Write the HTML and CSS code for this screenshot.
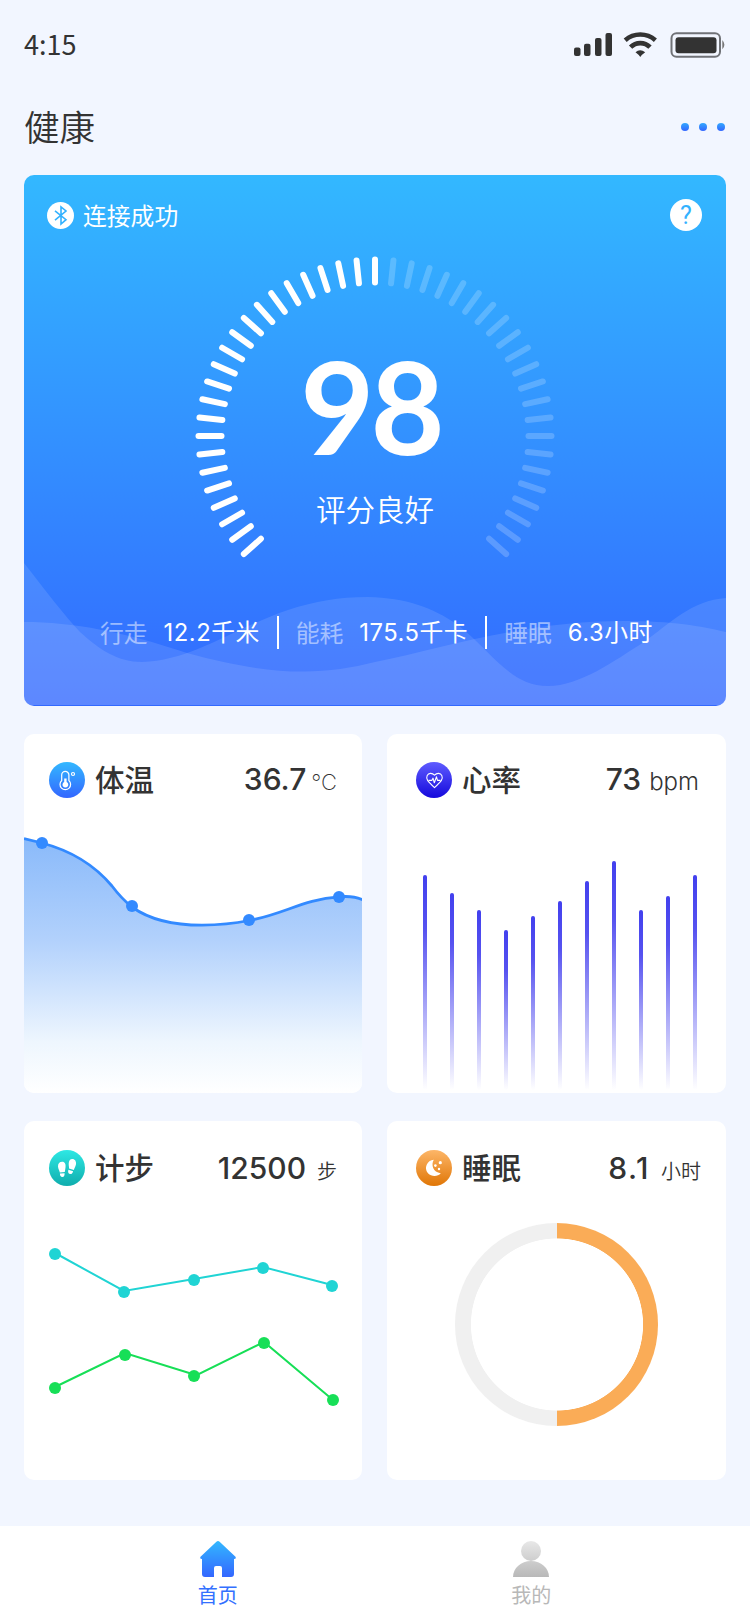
FILE: index.html
```html
<!DOCTYPE html>
<html lang="zh-CN">
<head>
    <meta charset="UTF-8">
    <meta name="viewport" content="width=device-width, initial-scale=1.0">
    <title>健康</title>
    <link rel="stylesheet" href="styles.css">
</head>
<body>

    <div class="status-bar">
        <div class="clock">4:15</div>
        <svg class="status-icons" width="152" height="28" viewBox="0 0 152 28">
            <g fill="#333">
                <rect x="0" y="17.5" width="6.5" height="8.5" rx="2"/>
                <rect x="10" y="13.7" width="6.5" height="12.3" rx="2"/>
                <rect x="21" y="8" width="6.5" height="18" rx="2"/>
                <rect x="31.5" y="3" width="6.5" height="23" rx="2"/>
                <path d="M61.5 22.3 Q66 18 71.2 22.3 Q68 24.5 66.3 27 Q64.5 24.5 61.5 22.3Z"/>
                <rect x="101.5" y="7.3" width="41" height="16" rx="3"/>
                <path d="M148.3 10 Q152.5 14.7 148.3 19.3Z" fill="#777"/>
            </g>
            <path d="M51.2 10.2 A23 23 0 0 1 81.4 10.2 M56.6 17.2 A13.5 13.5 0 0 1 76 17.2" fill="none" stroke="#333" stroke-width="4.6"/>
            <rect x="97.5" y="3.3" width="48.5" height="23.4" rx="5" fill="none" stroke="#707277" stroke-width="2"/>
        </svg>
    </div>

    <div class="page-header">
        <h1>健康</h1>
        <div class="more"><i></i><i></i><i></i></div>
    </div>

    <div class="score-card">
        <svg class="waves" width="702" height="531" viewBox="0 0 702 531">
            <g fill="#fff" fill-opacity="0.11">
                <path d="M0 388 C22 416 40 440 56 457 C76 475 94 487 118 487 C168 486 210 453 264 435 C292 426 314 422 344 422 C382 423 408 432 434 450 C466 475 486 511 524 511 C556 511 590 486 620 467 C645 449 668 425 702 423 V530 H0Z"/>
                <path d="M0 447 C50 447 100 457 163 478 C250 502 300 500 351 487 C420 473 500 446 600 446 C650 446 676 451 702 457 V530 H0Z"/>
            </g>
        </svg>
        <div class="score-top">
            <div class="connect">
                <svg width="27" height="27" viewBox="0 0 27 27">
                    <circle cx="13.5" cy="13.5" r="13.5" fill="#fff"/>
                    <path d="M8 8.8 L19 17.7 L14 22 V5 L19 9 L8 18.2" fill="none" stroke="#33b2ff" stroke-width="1.6"/>
                </svg>
                <span>连接成功</span>
            </div>
            <div class="help">?</div>
        </div>
        <div class="gauge">
            <svg id="gauge" width="360" height="302" viewBox="-180 -180 360 302"></svg>
            <div class="gauge-text">
                <div class="score">98</div>
                <div class="score-label">评分良好</div>
            </div>
        </div>
        <div class="stats">
            <div class="stat"><span>行走</span><b>12.2千米</b></div>
            <div class="stat"><span>能耗</span><b>175.5千卡</b></div>
            <div class="stat"><span>睡眠</span><b>6.3小时</b></div>
        </div>
    </div>

    <div class="cards">
        <div class="card">
            <div class="card-head">
                <svg class="icon" width="36" height="36" viewBox="0 0 36 36">
                    <defs><linearGradient id="blue" x2="0" y2="1"><stop stop-color="#33b8ff"/><stop offset="1" stop-color="#3366ff"/></linearGradient></defs>
                    <circle cx="18" cy="18" r="18" fill="url(#blue)"/>
                    <g fill="none" stroke="#fff" stroke-width="1.2">
                        <path d="M12.7 18.5 V13 A3.6 3.6 0 0 1 19.9 13 V18.5 A5.3 5.3 0 1 1 12.7 18.5Z"/>
                        <circle cx="24" cy="12" r="1.5"/>
                    </g>
                    <path d="M15.2 16.5 H17.6 V20 A2.9 2.9 0 1 1 15.2 20Z" fill="#fff"/>
                </svg>
                <h2>体温</h2>
                <div class="value">36.7<small class="unit-temp">℃</small></div>
            </div>
            <svg class="chart" width="339" height="295" viewBox="0 0 339 295">
                <defs><linearGradient id="area" x2="0" y2="1"><stop stop-color="#8abafa"/><stop offset="0.4" stop-color="#b2d1fc"/><stop offset="0.8" stop-color="#eef6fe"/><stop offset="1" stop-color="#fff"/></linearGradient></defs>
                <path d="M0 40.5 L18 45 C52 54 73 70 88 88 C94 96 98 101 108 109 C126 122 152 127.2 178 127.2 C196 127 210 125.5 225 122.5 C258 117 280 101 315 98.8 Q330 97.5 339 102 V295 H0Z" fill="url(#area)"/>
                <path d="M0 40.5 L18 45 C52 54 73 70 88 88 C94 96 98 101 108 109 C126 122 152 127.2 178 127.2 C196 127 210 125.5 225 122.5 C258 117 280 101 315 98.8 Q330 97.5 339 102" fill="none" stroke="#338aff" stroke-width="2.8"/>
                <g fill="#338aff">
                    <circle cx="18" cy="45" r="6"/>
                    <circle cx="108" cy="108" r="6"/>
                    <circle cx="225" cy="122" r="6"/>
                    <circle cx="315" cy="99" r="6"/>
                </g>
            </svg>
        </div>

        <div class="card card-right">
            <div class="card-head">
                <svg class="icon" width="36" height="36" viewBox="0 0 36 36">
                    <defs><linearGradient id="indigo" x2="0" y2="1"><stop stop-color="#5f5cff"/><stop offset="1" stop-color="#1408dc"/></linearGradient></defs>
                    <circle cx="18" cy="18" r="18" fill="url(#indigo)"/>
                    <g fill="none" stroke="#fff" stroke-width="1.1" stroke-linejoin="round">
                        <path d="M18.5 13.2 C16 10.5 12.5 11 11.2 13.4 C9.6 17 11.5 19 18.5 25.6 C25.5 19 27.4 17 25.8 13.4 C24.5 11 21 10.5 18.5 13.2Z"/>
                        <path d="M12.5 18.4 H15.8 L17 16.2 L18.3 20.8 L20.5 14.8 L21.5 18.4 H24.5"/>
                    </g>
                </svg>
                <h2>心率</h2>
                <div class="value">73<small class="unit-bpm">bpm</small></div>
            </div>
            <div class="bars" id="bars"></div>
        </div>

        <div class="card card-low">
            <div class="card-head">
                <svg class="icon" width="36" height="36" viewBox="0 0 36 36">
                    <defs><linearGradient id="teal" x2="0" y2="1"><stop stop-color="#2ee8e4"/><stop offset="1" stop-color="#0fadad"/></linearGradient></defs>
                    <circle cx="18" cy="18" r="18" fill="url(#teal)"/>
                    <g fill="#fff">
                        <path d="M13.2 11.8 C16 11.8 17 14.5 16.5 17.5 C16.2 19 16.2 20.5 15.8 22 L10.8 22.4 C10.5 20.5 9.2 19 9 16.5 C8.9 13.8 10.5 11.8 13.2 11.8Z"/>
                        <path d="M10.9 23.6 L15.6 23.2 C15.7 25.5 15 27 13.4 27 C11.7 27 10.9 25.6 10.9 23.6Z"/>
                        <path d="M23.3 9 C26 9 27.4 11.5 27 14.3 C26.6 16.5 25.4 18 24.9 20 L20 18.6 C20.2 17 19.6 15.8 19.7 13.8 C19.8 11 21 9 23.3 9Z"/>
                        <path d="M19.4 19.8 L24.1 21.2 C23.6 23.3 22.6 24.3 21 24 C19.1 23.7 18.8 21.9 19.4 19.8Z"/>
                    </g>
                </svg>
                <h2>计步</h2>
                <div class="value">12500<small class="unit-step">步</small></div>
            </div>
            <svg class="chart" width="339" height="294" viewBox="0 0 339 294">
                <polyline points="31,67 100,105 170,93 239,81 308,99" fill="none" stroke="#20d4d4" stroke-width="2"/>
                <g fill="#20d4d4">
                    <circle cx="31" cy="68" r="6"/>
                    <circle cx="100" cy="106" r="6"/>
                    <circle cx="170" cy="94" r="6"/>
                    <circle cx="239" cy="82" r="6"/>
                    <circle cx="308" cy="100" r="6"/>
                </g>
                <polyline points="31,201 99,168 104,168 170,188.5 173,189 240,156 309,214" fill="none" stroke="#17df57" stroke-width="2"/>
                <g fill="#17df57">
                    <circle cx="31" cy="202" r="6"/>
                    <circle cx="101" cy="169" r="6"/>
                    <circle cx="170" cy="190" r="6"/>
                    <circle cx="240" cy="157" r="6"/>
                    <circle cx="309" cy="214" r="6"/>
                </g>
            </svg>
        </div>

        <div class="card card-right card-low">
            <div class="card-head">
                <svg class="icon" width="36" height="36" viewBox="0 0 36 36">
                    <defs><linearGradient id="orange" x2="0" y2="1"><stop stop-color="#fdb668"/><stop offset="1" stop-color="#e07606"/></linearGradient></defs>
                    <circle cx="18" cy="18" r="18" fill="url(#orange)"/>
                    <g fill="#fff">
                        <path d="M17.8 9.8 C14.8 14.8 17 22.6 24.8 23.2 C22.5 25.8 18.5 26.6 15 25.2 C10.7 23.4 9 19 10.6 15 C11.8 12 14.5 10 17.8 9.8Z"/>
                        <circle cx="24.3" cy="12.7" r="1.6"/>
                        <circle cx="19.4" cy="15.6" r="1.3"/>
                        <circle cx="23" cy="19" r="1.2"/>
                    </g>
                </svg>
                <h2>睡眠</h2>
                <div class="value value-sleep">8.1<small class="unit-hour">小时</small></div>
            </div>
            <div class="ring"></div>
        </div>
    </div>

    <div class="tab-bar">
        <div class="tab active">
            <svg width="36" height="36" viewBox="0 0 36 36">
                <path d="M16.4 0.8 Q18 -0.6 19.6 0.8 L35.5 15.8 Q36.5 18 34 18 V33 Q34 36 31 36 H22 V27 Q22 25 20 25 H16 Q14 25 14 27 V36 H5 Q2 36 2 33 V18 Q-0.5 18 0.5 15.8Z" fill="url(#blue)"/>
            </svg>
            <span>首页</span>
        </div>
        <div class="tab">
            <svg width="36" height="36" viewBox="0 0 36 36">
                <defs><linearGradient id="grey" gradientUnits="userSpaceOnUse" x1="0" y1="0" x2="0" y2="36"><stop stop-color="#e8e8e8"/><stop offset="1" stop-color="#b8b8b8"/></linearGradient></defs>
                <circle cx="18" cy="10" r="10" fill="url(#grey)"/>
                <path d="M0 36 C0 27 8 20 18 20 C28 20 36 27 36 36Z" fill="url(#grey)"/>
            </svg>
            <span>我的</span>
        </div>
    </div>

    <script>
        // Gauge ticks, one every 6 degrees, lit up to the top
        const gauge = document.getElementById('gauge');
        for (let i = -22; i <= 22; i++) {
            const tick = document.createElementNS('http://www.w3.org/2000/svg', 'line');
            tick.setAttribute('y1', -176.5);
            tick.setAttribute('y2', -153.5);
            tick.setAttribute('transform', `rotate(${i * 6})`);
            tick.setAttribute('class', i > 0 ? 'tick off' : 'tick');
            gauge.appendChild(tick);
        }

        // Heart rate bars
        const rates = [215, 197, 180, 160, 174, 189, 209, 229, 180, 194, 215];
        const bars = document.getElementById('bars');
        rates.forEach(function(rate) {
            const bar = document.createElement('div');
            bar.className = 'bar';
            bar.style.height = rate + 'px';
            bars.appendChild(bar);
        });
    </script>

</body>
</html>
```
FILE: styles.css
```css
* {
    margin: 0;
    padding: 0;
    box-sizing: border-box;
}

body {
    width: 750px;
    height: 1624px;
    background-color: #f2f6ff;
    color: #333;
    font-family: "Noto Sans CJK SC", sans-serif;
    display: flex;
    flex-direction: column;
    overflow: hidden;
}

.status-bar {
    height: 90px;
    padding: 0 24px;
    display: flex;
    justify-content: space-between;
    align-items: center;
}

.clock {
    margin-top: -2px;
    font-size: 27px;
    font-weight: 400;
    line-height: 36px;
}

.status-icons {
    margin-top: -2px;
}

.page-header {
    height: 85px;
    padding: 0 25px 12px 24px;
    display: flex;
    justify-content: space-between;
    align-items: center;
}

.page-header h1 {
    margin-top: -1px;
    font-size: 35.5px;
    font-weight: 350;
    line-height: 50px;
}

.more {
    display: flex;
    gap: 10px;
}

.more i {
    width: 8px;
    height: 8px;
    border-radius: 50%;
    background: linear-gradient(#33a8ff, #3366ff);
}

/* Score card */
.score-card {
    position: relative;
    height: 531px;
    margin: 0 24px;
    border-radius: 10px;
    background: linear-gradient(#33b8ff, #3369ff);
    color: white;
    overflow: hidden;
}

.waves {
    position: absolute;
    left: 0;
    top: 0;
}

.score-top {
    height: 56px;
    padding: 24px 24px 0 23px;
    display: flex;
    justify-content: space-between;
    align-items: center;
}

.connect {
    display: flex;
    align-items: center;
    gap: 9px;
    font-size: 23.8px;
    line-height: 32px;
}

.connect span {
    margin-top: -1px;
}

.help {
    width: 32px;
    height: 32px;
    border-radius: 50%;
    background-color: white;
    color: #33b2ff;
    font-family: Roboto, sans-serif;
    font-size: 25px;
    font-weight: 400;
    line-height: 33px;
    text-align: center;
}

.gauge {
    width: 360px;
    height: 302px;
    margin: 25px 0 0 170.5px;
    position: relative;
}

.tick {
    stroke: white;
    stroke-width: 6;
    stroke-linecap: round;
}

.tick.off {
    stroke-opacity: 0.2;
}

.gauge-text {
    position: absolute;
    left: 0;
    top: 87px;
    width: 100%;
    text-align: center;
}

.score {
    margin: -2px 8px 3px 0;
    font-family: Lato, sans-serif;
    font-size: 128px;
    font-weight: 700;
    line-height: 130px;
    letter-spacing: -4px;
}

.score-label {
    margin-top: 17px;
    padding-left: 1px;
    font-size: 29.5px;
    font-weight: 350;
    line-height: 40px;
}

.stats {
    margin: 58px 0 0 76px;
    display: flex;
    position: relative;
}

.stat {
    height: 33px;
    display: flex;
    align-items: center;
    gap: 16px;
    font-size: 23.8px;
    line-height: 33px;
    white-space: nowrap;
}

.stat + .stat {
    margin-left: 17px;
    padding-left: 17px;
    border-left: 2px solid white;
}

.stat span {
    margin-top: -2px;
    opacity: 0.5;
}

.stat b {
    font-family: Inter, "Noto Sans CJK SC", sans-serif;
    font-weight: 400;
    letter-spacing: 0.5px;
}

/* Data cards */
.cards {
    margin: 28px 24px 0;
    display: grid;
    grid-template-columns: 338px 339px;
    gap: 28px 25px;
}

.card {
    height: 359px;
    padding-top: 28px;
    border-radius: 10px;
    background-color: white;
    overflow: hidden;
}

.card-low {
    padding-top: 29px;
}

.card-head {
    height: 36px;
    padding: 0 25px;
    display: flex;
    align-items: center;
}

.card-right .card-head {
    padding: 0 27px 0 29px;
}

.card-head h2 {
    margin: -4px 0 0 10px;
    font-size: 29.5px;
    font-weight: 500;
    line-height: 36px;
}

.value {
    margin: 1px 0 0 auto;
    display: flex;
    align-items: baseline;
    font-family: Inter, "Noto Sans CJK SC", sans-serif;
    font-size: 30px;
    font-weight: 450;
    line-height: 36px;
}

.card-low .value {
    margin-top: 4px;
}

.card-low.card-right .card-head {
    padding-right: 25px;
}

.value-sleep {
    letter-spacing: 1.5px;
}

.value small {
    font-size: 24px;
    font-weight: 300;
    letter-spacing: 0;
}

.value .unit-temp {
    margin-left: 5px;
    font-family: Inter, "DejaVu Sans", sans-serif;
    font-size: 22px;
    font-weight: 200;
}

.value .unit-bpm {
    margin-left: 8px;
}

.value .unit-step,
.value .unit-hour {
    margin-left: 11px;
    font-size: 20px;
    font-weight: 350;
}

.chart {
    display: block;
}

.bars {
    height: 292px;
    padding-left: 36px;
    display: flex;
    align-items: flex-end;
    gap: 23px;
}

.bar {
    width: 4px;
    border-radius: 2px;
    background: linear-gradient(#4240ee, #5652f0 25%, #fff);
}

.ring {
    width: 203px;
    height: 203px;
    margin: 37px 0 0 68px;
    border-radius: 50%;
    background: radial-gradient(circle at 102px 101.5px, #fff 85.7px, transparent 86.4px), linear-gradient(90deg, #f0f0f0 102px, #faac57 102px);
}

/* Bottom tabs */
.tab-bar {
    height: 98px;
    margin-top: auto;
    padding: 15px 62px 0 61px;
    display: flex;
    background-color: white;
}

.tab {
    flex: 1;
    display: flex;
    flex-direction: column;
    align-items: center;
    color: #b8b8b8;
    font-size: 20px;
    line-height: 28px;
}

.tab span {
    margin-top: 4px;
}

.tab.active {
    color: #3370ff;
}
```
